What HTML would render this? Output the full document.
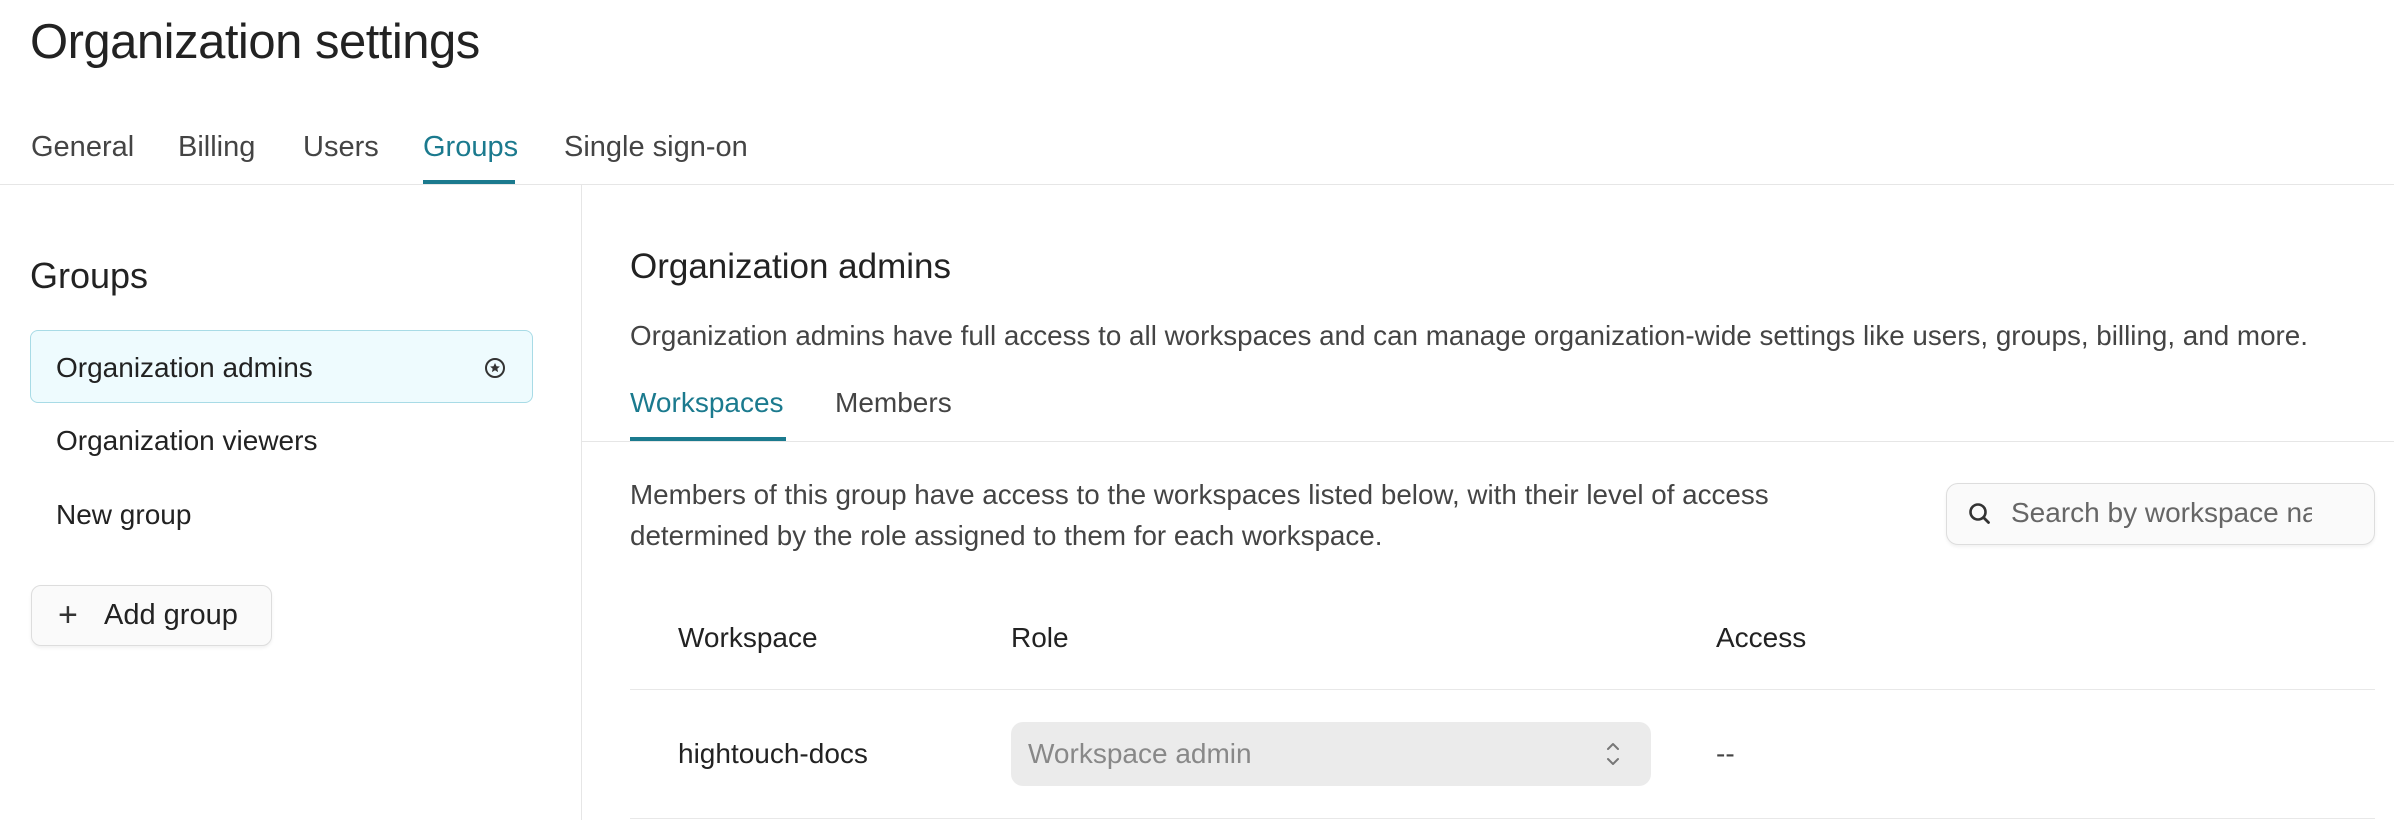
<!DOCTYPE html>
<html><head><meta charset="utf-8"><style>
*{margin:0;padding:0;box-sizing:border-box}
body{width:2394px;height:820px;background:#fff;font-family:"Liberation Sans",sans-serif;color:#262626;position:relative;overflow:hidden}
.a{position:absolute;white-space:nowrap}
</style></head><body>
<div class="a" style="left:30px;top:14px;font-size:49px;letter-spacing:-0.5px;color:#222">Organization settings</div>
<div class="a" style="left:31px;top:131px;font-size:29px;color:#444">General</div>
<div class="a" style="left:178px;top:131px;font-size:29px;color:#444">Billing</div>
<div class="a" style="left:303px;top:131px;font-size:29px;color:#444">Users</div>
<div class="a" style="left:423px;top:131px;font-size:29px;color:#1b7a8e">Groups</div>
<div class="a" style="left:423px;top:180px;width:92px;height:4px;background:#1b7a8e"></div>
<div class="a" style="left:564px;top:131px;font-size:29px;color:#444">Single sign-on</div>
<div class="a" style="left:0;top:184px;width:2394px;height:1px;background:#e6e6e6"></div>
<div class="a" style="left:581px;top:185px;width:1px;height:635px;background:#e6e6e6"></div>

<div class="a" style="left:30px;top:255px;font-size:36px;color:#222">Groups</div>
<div class="a" style="left:30px;top:330px;width:503px;height:73px;background:#eefbfe;border:1px solid #a8dbe6;border-radius:8px"></div>
<div class="a" style="left:56px;top:352px;font-size:28px;color:#222">Organization admins</div>
<svg class="a" style="left:483px;top:356px" width="24" height="24" viewBox="0 0 24 24"><circle cx="12" cy="12" r="9" fill="none" stroke="#333" stroke-width="2"/><path d="M12 7l1.5 3.2 3.4.3-2.6 2.3.8 3.3L12 14.3 8.9 16.1l.8-3.3-2.6-2.3 3.4-.3z" fill="#333"/></svg>
<div class="a" style="left:56px;top:425px;font-size:28px;color:#222">Organization viewers</div>
<div class="a" style="left:56px;top:499px;font-size:28px;color:#222">New group</div>
<div class="a" style="left:31px;top:585px;width:241px;height:61px;background:#fafafa;border:1px solid #ddd;border-radius:10px;box-shadow:0 2px 3px rgba(0,0,0,.06)"></div>
<div class="a" style="left:58px;top:596px;font-size:34px;color:#333">+</div>
<div class="a" style="left:104px;top:599px;font-size:29px;color:#222">Add group</div>

<div class="a" style="left:630px;top:247px;font-size:35px;color:#222">Organization admins</div>
<div class="a" style="left:630px;top:320px;font-size:27.8px;color:#444">Organization admins have full access to all workspaces and can manage organization-wide settings like users, groups, billing, and more.</div>
<div class="a" style="left:630px;top:387px;font-size:28px;color:#1b7a8e">Workspaces</div>
<div class="a" style="left:835px;top:387px;font-size:28px;color:#444">Members</div>
<div class="a" style="left:582px;top:441px;width:1812px;height:1px;background:#e6e6e6"></div>
<div class="a" style="left:630px;top:437px;width:156px;height:4px;background:#1b7a8e"></div>

<div class="a" style="left:630px;top:474px;font-size:27.8px;line-height:41px;color:#444">Members of this group have access to the workspaces listed below, with their level of access<br>determined by the role assigned to them for each workspace.</div>
<div class="a" style="left:1946px;top:483px;width:429px;height:62px;background:#fafafa;border:1px solid #ddd;border-radius:12px;box-shadow:0 2px 3px rgba(0,0,0,.06)"></div>
<svg class="a" style="left:1967px;top:501px" width="26" height="26" viewBox="0 0 26 26"><circle cx="11" cy="11" r="7.5" fill="none" stroke="#333" stroke-width="2.6"/><path d="M16.5 16.5l5 5" stroke="#333" stroke-width="2.8" stroke-linecap="round"/></svg>
<div class="a" style="left:2011px;top:497px;width:301px;overflow:hidden;font-size:28px;color:#666">Search by workspace name</div>

<div class="a" style="left:678px;top:622px;font-size:28px;color:#222">Workspace</div>
<div class="a" style="left:1011px;top:622px;font-size:28px;color:#222">Role</div>
<div class="a" style="left:1716px;top:622px;font-size:28px;color:#222">Access</div>
<div class="a" style="left:630px;top:689px;width:1745px;height:1px;background:#e8e8e8"></div>
<div class="a" style="left:678px;top:738px;font-size:28px;color:#222">hightouch-docs</div>
<div class="a" style="left:1011px;top:722px;width:640px;height:64px;background:#ebebeb;border-radius:12px"></div>
<div class="a" style="left:1028px;top:738px;font-size:28px;color:#888">Workspace admin</div>
<svg class="a" style="left:1603px;top:738px" width="20" height="32" viewBox="0 0 20 32"><path d="M5 11l5-5 5 5M5 21l5 5 5-5" fill="none" stroke="#777" stroke-width="2" stroke-linecap="round" stroke-linejoin="round"/></svg>
<div class="a" style="left:1716px;top:738px;font-size:28px;color:#444">--</div>
<div class="a" style="left:630px;top:818px;width:1745px;height:1px;background:#e8e8e8"></div>
</body></html>
